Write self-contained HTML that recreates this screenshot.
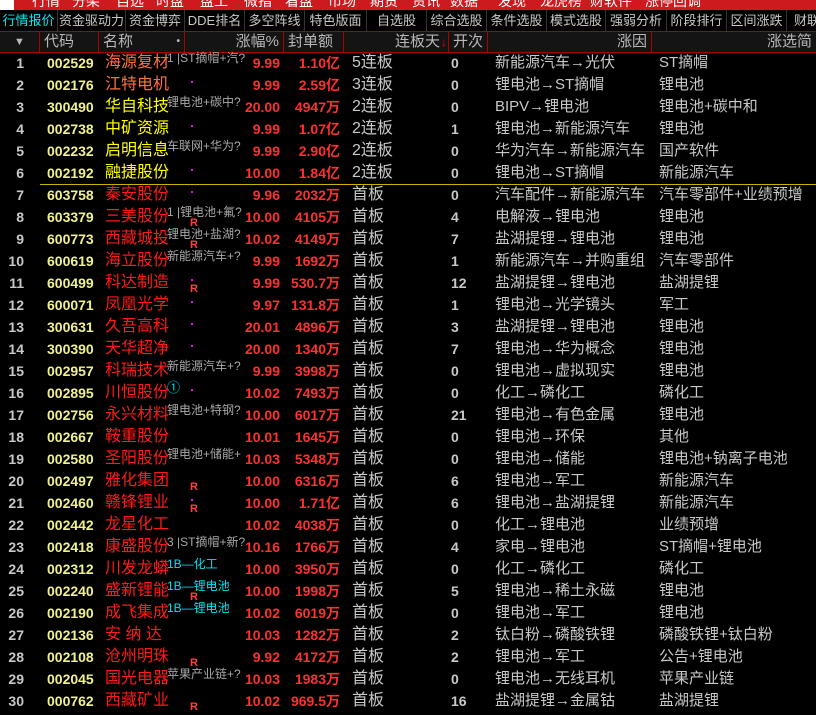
<!DOCTYPE html>
<html><head><meta charset="utf-8"><style>
*{margin:0;padding:0;box-sizing:border-box}
body{width:816px;height:715px;background:#000;overflow:hidden;position:relative;font-family:"Liberation Sans","Noto Sans CJK SC",sans-serif;color:#c8c8c8}
.top{position:absolute;left:0;top:0;width:816px;height:10px;background:#cc1a1e;overflow:hidden}
.top span{position:absolute;top:-9px;color:#fff;font-size:14px}
.tabs{position:absolute;left:0;top:10px;width:816px;height:21px;background:#000}
.tabs span{position:absolute;top:0;height:21px;line-height:21px;font-size:13px;text-align:center;border-right:1px solid #333;color:#c8c8c8}
.hdr{position:absolute;left:0;top:31px;width:816px;height:22px;background:#141414;border-top:1px solid #a00;border-bottom:1px solid #a00}
.hdr span{position:absolute;top:0;height:20px;line-height:20px;font-size:15px;color:#b8b8b8;border-right:1px solid #a00;padding:0 4px}
.r{position:absolute;left:0;width:816px;height:22px;line-height:22px}
.r span{position:absolute;top:0;white-space:nowrap}
.i{left:0;width:24px;text-align:right;font-weight:bold;font-size:14px;color:#c8c8c8}
.c{left:47px;font-weight:bold;font-size:14px;color:#f0f090}
.n{left:105px;font-size:16px;color:#ff1a1a}
.o{color:#ff7040!important}.y{color:#ffff00!important}
.p{right:536px;font-weight:bold;font-size:14px;color:#ff3030;text-align:right}
.f{right:476px;font-weight:bold;font-size:14px;color:#ff3030;text-align:right}
.b{left:352px;font-size:16px}
.k{left:451px;font-weight:bold;font-size:14px}
.z{left:495px;font-size:15px}
.s{left:659px;font-size:15px}
.a{left:167px;font-size:12px;color:#a8a8a8;top:-1px!important;line-height:14px}
.cy{color:#00e0f0}
.d{left:191px;top:7px!important;width:2px;height:2px;background:#f0f;line-height:0}
.R{left:190px;top:11px!important;font-size:11px;font-weight:bold;color:#ff4040;line-height:12px}
.ln{position:absolute;left:40px;top:184px;width:776px;height:1px;background:#c8b400}
</style></head><body>
<div class="top"><span style="left:0;background:#fff;width:14px;height:14px;top:-4px"></span><span style="left:32px">行情</span><span style="left:72px">分架</span><span style="left:116px">自选</span><span style="left:156px">时盘</span><span style="left:200px">盘工</span><span style="left:244px">微指</span><span style="left:285px">看盘</span><span style="left:328px">市场</span><span style="left:370px">期货</span><span style="left:412px">资讯</span><span style="left:450px">数据</span><span style="left:498px">发现</span><span style="left:540px">龙虎榜</span><span style="left:590px">财软件</span><span style="left:645px">涨停回调</span></div>
<div class="tabs">
<span style="left:0;width:58px;color:#00e8f0">行情报价</span><span style="left:58px;width:68px">资金驱动力</span><span style="left:126px;width:59px">资金博弈</span><span style="left:185px;width:60px">DDE排名</span><span style="left:245px;width:60px">多空阵线</span><span style="left:305px;width:62px">特色版面</span><span style="left:367px;width:60px">自选股</span><span style="left:427px;width:60px">综合选股</span><span style="left:487px;width:60px">条件选股</span><span style="left:547px;width:59px">模式选股</span><span style="left:606px;width:61px">强弱分析</span><span style="left:667px;width:60px">阶段排行</span><span style="left:727px;width:60px">区间涨跌</span><span style="left:787px;width:40px;border:none">财联</span>
</div>
<div class="hdr">
<span style="left:0;width:40px;text-align:center;font-size:11px">▼</span><span style="left:40px;width:59px">代码</span><span style="left:99px;width:86px">名称<b style="position:absolute;right:4px;font-size:10px">•</b></span><span style="left:185px;width:99px;text-align:right">涨幅%</span><span style="left:284px;width:60px">封单额</span><span style="left:344px;width:105px;text-align:right;padding-right:8px">连板天<b style="position:absolute;right:1px;color:#f00;font-size:12px">↓</b></span><span style="left:449px;width:39px">开次</span><span style="left:488px;width:164px;text-align:right">涨因</span><span style="left:652px;width:164px;text-align:right;border:none">涨选简</span>
</div>
<div class="ln"></div>

<div class="r" style="top:52px"><span class="i">1</span><span class="c">002529</span><span class="n o">海源复材</span><span class="a">1 |ST摘帽+汽?</span><span class="p">9.99</span><span class="f">1.10亿</span><span class="b">5连板</span><span class="k">0</span><span class="z">新能源汽车→光伏</span><span class="s">ST摘帽</span></div>
<div class="r" style="top:74px"><span class="i">2</span><span class="c">002176</span><span class="n o">江特电机</span><span class="d"></span><span class="p">9.99</span><span class="f">2.59亿</span><span class="b">3连板</span><span class="k">0</span><span class="z">锂电池→ST摘帽</span><span class="s">锂电池</span></div>
<div class="r" style="top:96px"><span class="i">3</span><span class="c">300490</span><span class="n y">华自科技</span><span class="a">锂电池+碳中?</span><span class="p">20.00</span><span class="f">4947万</span><span class="b">2连板</span><span class="k">0</span><span class="z">BIPV→锂电池</span><span class="s">锂电池+碳中和</span></div>
<div class="r" style="top:118px"><span class="i">4</span><span class="c">002738</span><span class="n y">中矿资源</span><span class="d"></span><span class="p">9.99</span><span class="f">1.07亿</span><span class="b">2连板</span><span class="k">1</span><span class="z">锂电池→新能源汽车</span><span class="s">锂电池</span></div>
<div class="r" style="top:140px"><span class="i">5</span><span class="c">002232</span><span class="n y">启明信息</span><span class="a">车联网+华为?</span><span class="p">9.99</span><span class="f">2.90亿</span><span class="b">2连板</span><span class="k">0</span><span class="z">华为汽车→新能源汽车</span><span class="s">国产软件</span></div>
<div class="r" style="top:162px"><span class="i">6</span><span class="c">002192</span><span class="n y">融捷股份</span><span class="d"></span><span class="p">10.00</span><span class="f">1.84亿</span><span class="b">2连板</span><span class="k">0</span><span class="z">锂电池→ST摘帽</span><span class="s">新能源汽车</span></div>
<div class="r" style="top:184px"><span class="i">7</span><span class="c">603758</span><span class="n">秦安股份</span><span class="d"></span><span class="p">9.96</span><span class="f">2032万</span><span class="b">首板</span><span class="k">0</span><span class="z">汽车配件→新能源汽车</span><span class="s">汽车零部件+业绩预增</span></div>
<div class="r" style="top:206px"><span class="i">8</span><span class="c">603379</span><span class="n">三美股份</span><span class="a">1 |锂电池+氟?</span><span class="R">R</span><span class="p">10.00</span><span class="f">4105万</span><span class="b">首板</span><span class="k">4</span><span class="z">电解液→锂电池</span><span class="s">锂电池</span></div>
<div class="r" style="top:228px"><span class="i">9</span><span class="c">600773</span><span class="n">西藏城投</span><span class="a">锂电池+盐湖?</span><span class="R">R</span><span class="p">10.02</span><span class="f">4149万</span><span class="b">首板</span><span class="k">7</span><span class="z">盐湖提锂→锂电池</span><span class="s">锂电池</span></div>
<div class="r" style="top:250px"><span class="i">10</span><span class="c">600619</span><span class="n">海立股份</span><span class="a">新能源汽车+?</span><span class="p">9.99</span><span class="f">1692万</span><span class="b">首板</span><span class="k">1</span><span class="z">新能源汽车→并购重组</span><span class="s">汽车零部件</span></div>
<div class="r" style="top:272px"><span class="i">11</span><span class="c">600499</span><span class="n">科达制造</span><span class="d"></span><span class="R">R</span><span class="p">9.99</span><span class="f">530.7万</span><span class="b">首板</span><span class="k">12</span><span class="z">盐湖提锂→锂电池</span><span class="s">盐湖提锂</span></div>
<div class="r" style="top:294px"><span class="i">12</span><span class="c">600071</span><span class="n">凤凰光学</span><span class="d"></span><span class="p">9.97</span><span class="f">131.8万</span><span class="b">首板</span><span class="k">1</span><span class="z">锂电池→光学镜头</span><span class="s">军工</span></div>
<div class="r" style="top:316px"><span class="i">13</span><span class="c">300631</span><span class="n">久吾高科</span><span class="d"></span><span class="p">20.01</span><span class="f">4896万</span><span class="b">首板</span><span class="k">3</span><span class="z">盐湖提锂→锂电池</span><span class="s">锂电池</span></div>
<div class="r" style="top:338px"><span class="i">14</span><span class="c">300390</span><span class="n">天华超净</span><span class="d"></span><span class="p">20.00</span><span class="f">1340万</span><span class="b">首板</span><span class="k">7</span><span class="z">锂电池→华为概念</span><span class="s">锂电池</span></div>
<div class="r" style="top:360px"><span class="i">15</span><span class="c">002957</span><span class="n">科瑞技术</span><span class="a">新能源汽车+?</span><span class="p">9.99</span><span class="f">3998万</span><span class="b">首板</span><span class="k">0</span><span class="z">锂电池→虚拟现实</span><span class="s">锂电池</span></div>
<div class="r" style="top:382px"><span class="i">16</span><span class="c">002895</span><span class="n">川恒股份</span><span class="a cy" style="font-size:13px">①</span><span class="d"></span><span class="p">10.02</span><span class="f">7493万</span><span class="b">首板</span><span class="k">0</span><span class="z">化工→磷化工</span><span class="s">磷化工</span></div>
<div class="r" style="top:404px"><span class="i">17</span><span class="c">002756</span><span class="n">永兴材料</span><span class="a">锂电池+特钢?</span><span class="p">10.00</span><span class="f">6017万</span><span class="b">首板</span><span class="k">21</span><span class="z">锂电池→有色金属</span><span class="s">锂电池</span></div>
<div class="r" style="top:426px"><span class="i">18</span><span class="c">002667</span><span class="n">鞍重股份</span><span class="p">10.01</span><span class="f">1645万</span><span class="b">首板</span><span class="k">0</span><span class="z">锂电池→环保</span><span class="s">其他</span></div>
<div class="r" style="top:448px"><span class="i">19</span><span class="c">002580</span><span class="n">圣阳股份</span><span class="a">锂电池+储能+</span><span class="p">10.03</span><span class="f">5348万</span><span class="b">首板</span><span class="k">0</span><span class="z">锂电池→储能</span><span class="s">锂电池+钠离子电池</span></div>
<div class="r" style="top:470px"><span class="i">20</span><span class="c">002497</span><span class="n">雅化集团</span><span class="R">R</span><span class="p">10.00</span><span class="f">6316万</span><span class="b">首板</span><span class="k">6</span><span class="z">锂电池→军工</span><span class="s">新能源汽车</span></div>
<div class="r" style="top:492px"><span class="i">21</span><span class="c">002460</span><span class="n">赣锋锂业</span><span class="d"></span><span class="R">R</span><span class="p">10.00</span><span class="f">1.71亿</span><span class="b">首板</span><span class="k">6</span><span class="z">锂电池→盐湖提锂</span><span class="s">新能源汽车</span></div>
<div class="r" style="top:514px"><span class="i">22</span><span class="c">002442</span><span class="n">龙星化工</span><span class="p">10.02</span><span class="f">4038万</span><span class="b">首板</span><span class="k">0</span><span class="z">化工→锂电池</span><span class="s">业绩预增</span></div>
<div class="r" style="top:536px"><span class="i">23</span><span class="c">002418</span><span class="n">康盛股份</span><span class="a">3 |ST摘帽+新?</span><span class="p">10.16</span><span class="f">1766万</span><span class="b">首板</span><span class="k">4</span><span class="z">家电→锂电池</span><span class="s">ST摘帽+锂电池</span></div>
<div class="r" style="top:558px"><span class="i">24</span><span class="c">002312</span><span class="n">川发龙蟒</span><span class="a cy">1B—化工</span><span class="p">10.00</span><span class="f">3950万</span><span class="b">首板</span><span class="k">0</span><span class="z">化工→磷化工</span><span class="s">磷化工</span></div>
<div class="r" style="top:580px"><span class="i">25</span><span class="c">002240</span><span class="n">盛新锂能</span><span class="a cy">1B—锂电池</span><span class="R">R</span><span class="p">10.00</span><span class="f">1998万</span><span class="b">首板</span><span class="k">5</span><span class="z">锂电池→稀土永磁</span><span class="s">锂电池</span></div>
<div class="r" style="top:602px"><span class="i">26</span><span class="c">002190</span><span class="n">成飞集成</span><span class="a cy">1B—锂电池</span><span class="p">10.02</span><span class="f">6019万</span><span class="b">首板</span><span class="k">0</span><span class="z">锂电池→军工</span><span class="s">锂电池</span></div>
<div class="r" style="top:624px"><span class="i">27</span><span class="c">002136</span><span class="n">安 纳 达</span><span class="p">10.03</span><span class="f">1282万</span><span class="b">首板</span><span class="k">2</span><span class="z">钛白粉→磷酸铁锂</span><span class="s">磷酸铁锂+钛白粉</span></div>
<div class="r" style="top:646px"><span class="i">28</span><span class="c">002108</span><span class="n">沧州明珠</span><span class="R">R</span><span class="p">9.92</span><span class="f">4172万</span><span class="b">首板</span><span class="k">2</span><span class="z">锂电池→军工</span><span class="s">公告+锂电池</span></div>
<div class="r" style="top:668px"><span class="i">29</span><span class="c">002045</span><span class="n">国光电器</span><span class="a">苹果产业链+?</span><span class="p">10.03</span><span class="f">1983万</span><span class="b">首板</span><span class="k">0</span><span class="z">锂电池→无线耳机</span><span class="s">苹果产业链</span></div>
<div class="r" style="top:690px"><span class="i">30</span><span class="c">000762</span><span class="n">西藏矿业</span><span class="R">R</span><span class="p">10.02</span><span class="f">969.5万</span><span class="b">首板</span><span class="k">16</span><span class="z">盐湖提锂→金属钴</span><span class="s">盐湖提锂</span></div>
</body></html>
